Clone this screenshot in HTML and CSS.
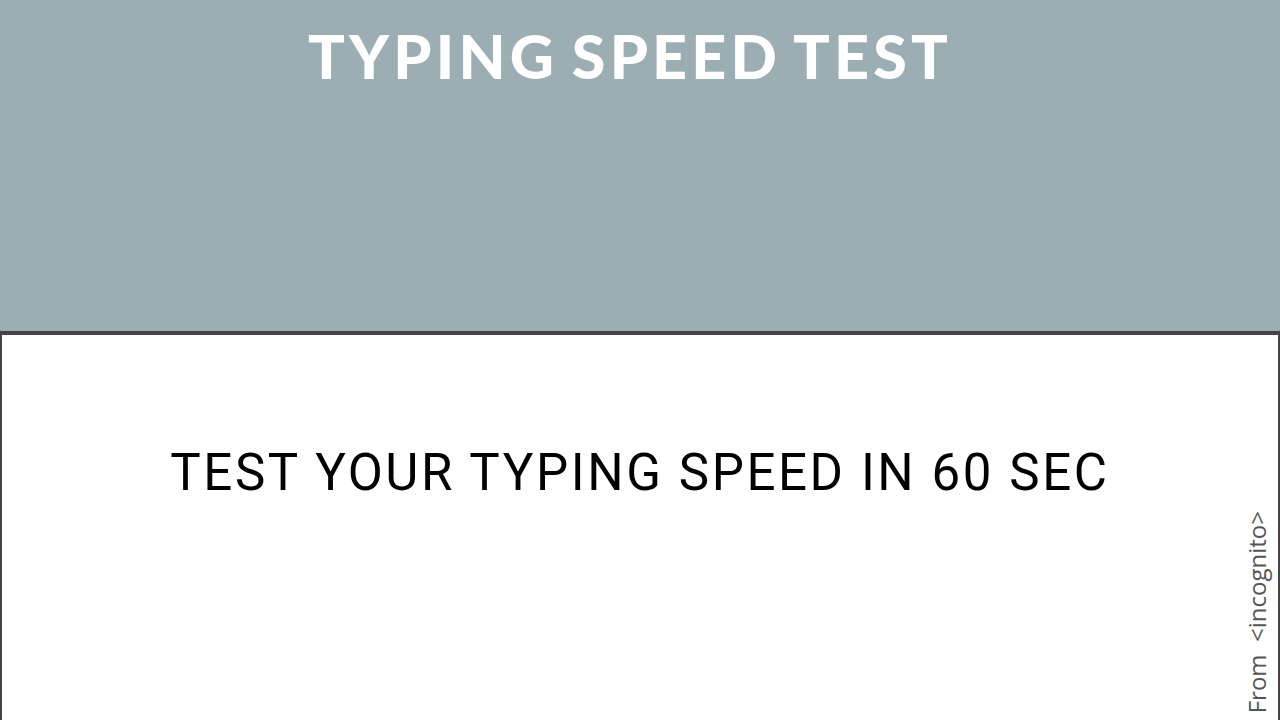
FILE: index.html
```html
<!DOCTYPE html>
<html>
<head>
<meta charset="utf-8">
<link rel="stylesheet" href="styles.css">
</head>
<body>
<header class="top">
  <h1 class="title">TYPING SPEED TEST</h1>
</header>
<main class="panel">
  <p class="tagline">TEST YOUR TYPING SPEED IN 60 SEC</p>
  <div class="credit">From &nbsp;&lt;incognito&gt;</div>
</main>
</body>
</html>
```
FILE: styles.css
```css
html, body {
  margin: 0;
  padding: 0;
  height: 100%;
  overflow: hidden;
  background: #ffffff;
}
.top {
  height: 331px;
  background: #9aaeb4;
  display: flex;
  justify-content: center;
}
.title {
  margin: 20px 0 0 -20px;
  font-family: "Lato", sans-serif;
  font-weight: 900;
  font-size: 61px;
  line-height: 72px;
  color: #ffffff;
  letter-spacing: 4.2px;
  word-spacing: -5px;
}
.panel {
  position: relative;
  height: 420px;
  border: 2px solid #444444;
  border-top: 4px solid #444444;
  border-bottom: none;
  box-sizing: border-box;
  display: flex;
  justify-content: center;
}
.tagline {
  margin: 108px 0 0 0;
  font-family: "Roboto", sans-serif;
  font-weight: 400;
  font-size: 51px;
  line-height: 60px;
  letter-spacing: 2.6px;
  color: #000000;
}
.credit {
  position: absolute;
  right: 8px;
  top: 176px;
  writing-mode: vertical-rl;
  transform: rotate(180deg);
  font-family: "Open Sans", sans-serif;
  font-size: 24px;
  line-height: 26px;
  color: #555555;
  white-space: pre;
}
```
